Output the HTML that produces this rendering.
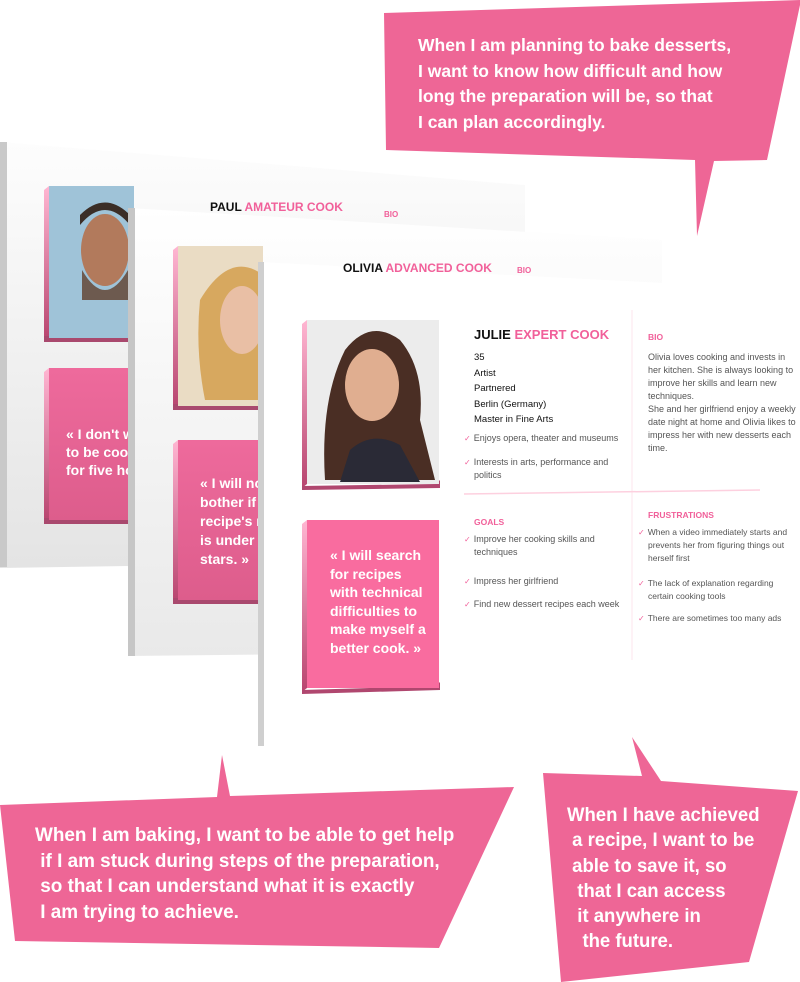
<!DOCTYPE html>
<html><head><meta charset="utf-8"><style>
*{margin:0;padding:0;box-sizing:border-box}
body{width:800px;height:982px;background:#fff;position:relative;overflow:hidden;font-family:"Liberation Sans",sans-serif}
.a{position:absolute}
.t{position:absolute;white-space:nowrap}
.pink{color:#f1609a}
.q{color:#fff;font-weight:bold;font-size:14px;line-height:18px;white-space:nowrap}
.sm{font-size:9px;color:#555;line-height:13px}
.ck{color:#f1609a;font-size:8px;margin-right:3px}
.bub{color:#fff;font-weight:bold;position:absolute;white-space:nowrap}
</style></head><body>
<svg class="a" style="left:0;top:0" width="800" height="982">
<defs>
<linearGradient id="g1" x1="0" y1="0" x2="0" y2="1"><stop offset="0" stop-color="#fdfdfd"/><stop offset="1" stop-color="#e4e4e4"/></linearGradient>
<linearGradient id="g2" x1="0" y1="0" x2="0" y2="1"><stop offset="0" stop-color="#fff"/><stop offset="1" stop-color="#e9e9e9"/></linearGradient>
<linearGradient id="pq" x1="0" y1="0" x2="0" y2="1"><stop offset="0" stop-color="#ee6a9c"/><stop offset="1" stop-color="#dd5d8c"/></linearGradient>
<linearGradient id="side" x1="0" y1="0" x2="0" y2="1"><stop offset="0" stop-color="#ffb6d2"/><stop offset="1" stop-color="#b8456f"/></linearGradient>
</defs>
<polygon points="0,142 525,185 525,560 0,568" fill="url(#g1)"/>
<rect x="0" y="142" width="7" height="425" fill="#c9c9c9"/>
<polygon points="44,190 49,186 49,336 44,340" fill="url(#side)"/>
<rect x="44" y="336" width="90" height="6" fill="#a9496e"/>
<rect x="49" y="186" width="85" height="152" fill="#9fc3d8"/>
<ellipse cx="105" cy="250" rx="24" ry="36" fill="#b27a5c"/>
<path d="M80 225 Q105 195 130 225 L130 215 Q105 190 80 215Z" fill="#3b2e27"/>
<path d="M82 270 Q105 310 128 270 L128 300 L82 300Z" fill="#6d5a4f"/>
<polygon points="44,372 49,368 49,518 44,522" fill="url(#side)"/>
<rect x="44" y="518" width="90" height="6" fill="#a9496e"/>
<rect x="49" y="368" width="85" height="152" fill="url(#pq)"/>
<polygon points="128,208 662,240 662,650 128,656" fill="url(#g2)"/>
<rect x="128" y="208" width="7" height="448" fill="#c6c6c6"/>
<polygon points="173,250 178,246 178,404 173,408" fill="url(#side)"/>
<rect x="173" y="404" width="90" height="6" fill="#a9496e"/>
<rect x="178" y="246" width="85" height="160" fill="#eadcc4"/>
<path d="M200 300 Q230 250 263 275 L263 400 L205 400 Q195 350 200 300Z" fill="#d7a85f"/>
<ellipse cx="242" cy="320" rx="22" ry="34" fill="#e9bfa5"/>
<polygon points="173,444 178,440 178,598 173,602" fill="url(#side)"/>
<rect x="173" y="598" width="90" height="6" fill="#a9496e"/>
<rect x="178" y="440" width="85" height="160" fill="url(#pq)"/>
<polygon points="258,262 800,290 800,688 260,746" fill="#fff"/>
<rect x="258" y="262" width="6" height="484" fill="#cfcfcf"/>
<polygon points="302,324 307,320 307,484 302,488" fill="url(#side)"/>
<polygon points="302,486 436,484 440,480 440,488 302,490" fill="#b0476f"/>
<rect x="307" y="320" width="132" height="164" fill="#ececec"/>
<path d="M325 480 Q320 400 345 350 Q370 318 400 340 Q425 370 420 420 Q430 460 435 480Z" fill="#4a2e24"/>
<ellipse cx="372" cy="385" rx="27" ry="36" fill="#e0ae90"/>
<path d="M350 450 Q372 430 400 445 L420 482 L340 482Z" fill="#2a2a36"/>
<polygon points="302,524 307,520 307,688 302,692" fill="url(#side)"/>
<polygon points="302,690 436,686 440,682 440,690 302,694" fill="#b0476f"/>
<rect x="307" y="520" width="132" height="168" fill="#f96c9f"/>
<line x1="632" y1="310" x2="632" y2="660" stroke="#fde4ec" stroke-width="1"/>
<line x1="464" y1="494" x2="760" y2="490" stroke="#fdd0df" stroke-width="1.5"/>
<polygon points="384,13 800,0 800,5 767,160 714,161 697,236 695,160 386,150" fill="#ee6696"/>
<polygon points="0,805 217,797 222,755 230,796 514,787 439,948 15,941" fill="#ee6696"/>
<polygon points="543,773 642,776 632,737 661,781 798,791 749,962 561,982" fill="#ee6696"/>
</svg>

<div class="t" style="left:210px;top:200px;font-size:12px;font-weight:bold;color:#111">PAUL <span class="pink">AMATEUR COOK</span></div>
<div class="t pink" style="left:384px;top:210px;font-size:8px;font-weight:bold">BIO</div>
<div class="a q" style="left:66px;top:425px;width:62px;overflow:hidden">« I don't want<br>to be cooking<br>for five hours</div>

<div class="t" style="left:343px;top:261px;font-size:12px;font-weight:bold;color:#111">OLIVIA <span class="pink">ADVANCED COOK</span></div>
<div class="t pink" style="left:517px;top:266px;font-size:8px;font-weight:bold">BIO</div>
<div class="a q" style="left:200px;top:474px;width:58px;overflow:hidden;line-height:19px">« I will not<br>bother if the<br>recipe's rating<br>is under four<br>stars. »</div>

<div class="t" style="left:474px;top:327px;font-size:13px;font-weight:bold;color:#111">JULIE <span class="pink">EXPERT COOK</span></div>
<div class="t" style="left:474px;top:350px;font-size:9.5px;line-height:15.5px;color:#111">35<br>Artist<br>Partnered<br>Berlin (Germany)<br>Master in Fine Arts</div>
<div class="t sm" style="left:464px;top:432px"><span class="ck">✓</span>Enjoys opera, theater and museums</div>
<div class="t sm" style="left:464px;top:456px"><span class="ck">✓</span>Interests in arts, performance and<br><span style="margin-left:10px">politics</span></div>
<div class="t pink" style="left:648px;top:332px;font-size:8.5px;font-weight:bold">BIO</div>
<div class="t sm" style="left:648px;top:351px;line-height:13px">Olivia loves cooking and invests in<br>her kitchen. She is always looking to<br>improve her skills and learn new<br>techniques.<br>She and her girlfriend enjoy a weekly<br>date night at home and Olivia likes to<br>impress her with new desserts each<br>time.</div>
<div class="t pink" style="left:474px;top:517px;font-size:8.5px;font-weight:bold">GOALS</div>
<div class="t sm" style="left:464px;top:533px"><span class="ck">✓</span>Improve her cooking skills and<br><span style="margin-left:10px">techniques</span></div>
<div class="t sm" style="left:464px;top:575px"><span class="ck">✓</span>Impress her girlfriend</div>
<div class="t sm" style="left:464px;top:598px"><span class="ck">✓</span>Find new dessert recipes each week</div>
<div class="t pink" style="left:648px;top:510px;font-size:8.5px;font-weight:bold">FRUSTRATIONS</div>
<div class="t sm" style="left:638px;top:526px;font-size:8.5px"><span class="ck">✓</span>When a video immediately starts and<br><span style="margin-left:10px">prevents her from figuring things out</span><br><span style="margin-left:10px">herself first</span></div>
<div class="t sm" style="left:638px;top:577px;font-size:8.5px"><span class="ck">✓</span>The lack of explanation regarding<br><span style="margin-left:10px">certain cooking tools</span></div>
<div class="t sm" style="left:638px;top:612px;font-size:8.5px"><span class="ck">✓</span>There are sometimes too many ads</div>
<div class="t q" style="left:330px;top:546px;line-height:18.5px">« I will search<br>for recipes<br>with technical<br>difficulties to<br>make myself a<br>better cook. »</div>

<div class="bub" style="left:418px;top:33px;font-size:17.5px;line-height:25.5px">When I am planning to bake desserts,<br>I want to know how difficult and how<br>long the preparation will be, so that<br>I can plan accordingly.</div>
<div class="bub" style="left:35px;top:823px;font-size:19.5px;line-height:25.5px;transform:scaleX(0.97);transform-origin:0 0">When I am baking, I want to be able to get help<br>&nbsp;if I am stuck during steps of the preparation,<br>&nbsp;so that I can understand what it is exactly<br>&nbsp;I am trying to achieve.</div>
<div class="bub" style="left:567px;top:803px;font-size:19.5px;line-height:25.3px;transform:scaleX(0.95);transform-origin:0 0">When I have achieved<br>&nbsp;a recipe, I want to be<br>&nbsp;able to save it, so<br>&nbsp;&nbsp;that I can access<br>&nbsp;&nbsp;it anywhere in<br>&nbsp;&nbsp;&nbsp;the future.</div>
</body></html>
